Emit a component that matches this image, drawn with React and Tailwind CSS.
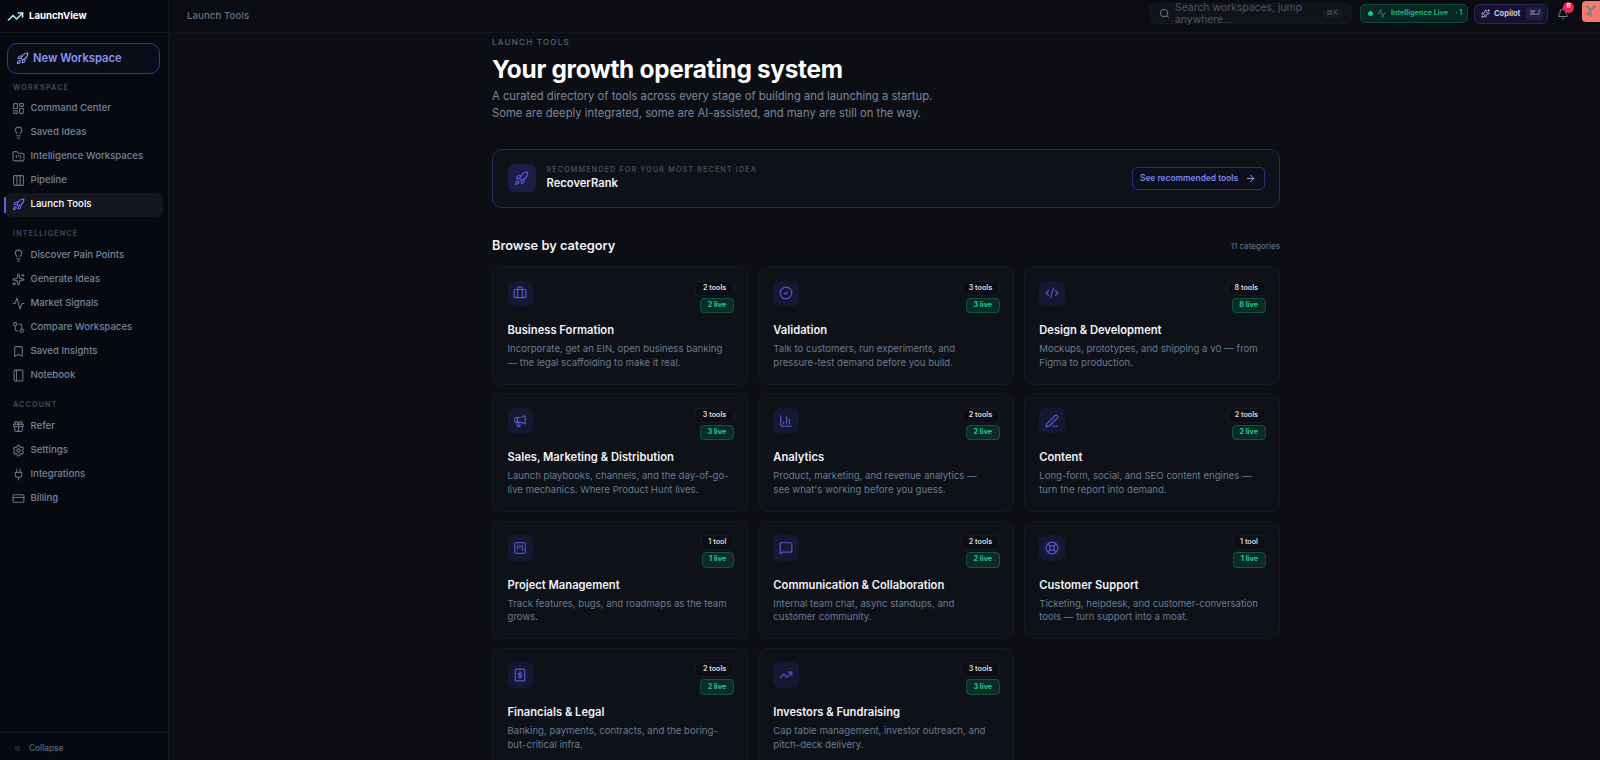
import {
  Activity, ArrowRight, BarChart3, Bell, Bookmark, Briefcase, ChevronsLeft, CircleCheck, CodeXml, Columns3,
  CreditCard, FolderKanban, Gift, GitCompare, LayoutDashboard, LifeBuoy, Lightbulb, Megaphone, MessageSquare,
  PenLine, Plug, Rocket, Search, Settings, Sparkles, SquareKanban, TrendingUp,
} from 'lucide-react';

function NotebookIcon({ className }) {
  return (
    <svg className={className} viewBox="0 0 24 24" fill="none" stroke="currentColor" strokeWidth="2" strokeLinecap="round" strokeLinejoin="round">
      <rect x="4" y="2" width="16" height="20" rx="2" />
      <path d="M8.5 2v20" />
    </svg>
  );
}

const navGroups = [
  {
    label: 'Workspace',
    items: [
      { name: 'Command Center', icon: LayoutDashboard },
      { name: 'Saved Ideas', icon: Lightbulb },
      { name: 'Intelligence Workspaces', icon: FolderKanban },
      { name: 'Pipeline', icon: Columns3 },
      { name: 'Launch Tools', icon: Rocket, active: true },
    ],
  },
  {
    label: 'Intelligence',
    items: [
      { name: 'Discover Pain Points', icon: Lightbulb },
      { name: 'Generate Ideas', icon: Sparkles },
      { name: 'Market Signals', icon: Activity },
      { name: 'Compare Workspaces', icon: GitCompare },
      { name: 'Saved Insights', icon: Bookmark },
      { name: 'Notebook', icon: NotebookIcon },
    ],
  },
  {
    label: 'Account',
    items: [
      { name: 'Refer', icon: Gift },
      { name: 'Settings', icon: Settings },
      { name: 'Integrations', icon: Plug },
      { name: 'Billing', icon: CreditCard },
    ],
  },
];

// lucide has no portrait receipt with a dollar sign in it
function DollarDoc({ className }) {
  return (
    <svg className={className} viewBox="0 0 24 24" fill="none" stroke="currentColor" strokeWidth="2" strokeLinecap="round" strokeLinejoin="round">
      <rect x="4" y="2" width="16" height="20" rx="2" />
      <path d="M12 6v12M15 8.5h-4a1.75 1.75 0 0 0 0 3.5h2a1.75 1.75 0 0 1 0 3.5H9" />
    </svg>
  );
}

const categories = [
  { name: 'Business Formation', tools: '2 tools', live: '2 live', icon: Briefcase, desc: 'Incorporate, get an EIN, open business banking — the legal scaffolding to make it real.' },
  { name: 'Validation', tools: '3 tools', live: '3 live', icon: CircleCheck, desc: 'Talk to customers, run experiments, and pressure-test demand before you build.' },
  { name: 'Design & Development', tools: '8 tools', live: '8 live', icon: CodeXml, desc: 'Mockups, prototypes, and shipping a v0 — from Figma to production.' },
  { name: 'Sales, Marketing & Distribution', tools: '3 tools', live: '3 live', icon: Megaphone, desc: 'Launch playbooks, channels, and the day-of-go-live mechanics. Where Product Hunt lives.' },
  { name: 'Analytics', tools: '2 tools', live: '2 live', icon: BarChart3, desc: "Product, marketing, and revenue analytics — see\u00a0what's working before you guess." },
  { name: 'Content', tools: '2 tools', live: '2 live', icon: PenLine, desc: 'Long-form, social, and SEO content engines — turn the report into demand.' },
  { name: 'Project Management', tools: '1 tool', live: '1 live', icon: SquareKanban, desc: 'Track features, bugs, and roadmaps as the team grows.' },
  { name: 'Communication & Collaboration', tools: '2 tools', live: '2 live', icon: MessageSquare, desc: 'Internal team chat, async standups, and customer community.' },
  { name: 'Customer Support', tools: '1 tool', live: '1 live', icon: LifeBuoy, desc: 'Ticketing, helpdesk, and customer-conversation tools — turn support into a moat.' },
  { name: 'Financials & Legal', tools: '2 tools', live: '2 live', icon: DollarDoc, desc: 'Banking, payments, contracts, and the boring-but-critical infra.' },
  { name: 'Investors & Fundraising', tools: '3 tools', live: '3 live', icon: TrendingUp, desc: 'Cap table management, investor outreach, and pitch-deck delivery.' },
];

function Sidebar() {
  return (
    <aside className="w-[169px] shrink-0 h-full flex flex-col bg-[#070910] border-r border-[#14171e]">
      <div className="h-[33px] shrink-0 flex items-center gap-[5px] pl-[7px] border-b border-[#12151b]">
        <TrendingUp className="w-[17px] h-[17px] text-[#b5ecec]" strokeWidth={2.2} />
        <span className="text-[9.6px] font-bold text-white">LaunchView</span>
      </div>

      <div className="flex-1 px-[5px] pt-[10px]">
        <button className="ml-[2px] w-[153px] h-[31px] flex items-center gap-[4px] pl-[8px] rounded-[10px] border border-[#363a8c] bg-[#0a0c18] text-[#8b95f5]">
          <Rocket className="w-[13px] h-[13px]" />
          <span className="text-[11.2px] font-semibold">New Workspace</span>
        </button>

        {navGroups.map((group, i) => (
          <div key={group.label} className={i === 0 ? 'mt-[7px]' : 'mt-[10.5px]'}>
            <div className="h-[15px] flex items-center pl-[8px] text-[7.2px] font-semibold uppercase tracking-[1.15px] text-[#454c5a]">
              {group.label}
            </div>
            <div className={`flex flex-col ${i === 0 ? 'mt-[0.5px]' : 'mt-[1.5px]'}`}>
              {group.items.map((item) => {
                const Icon = item.icon;
                return (
                  <div
                    key={item.name}
                    className={`relative h-[24px] flex items-center gap-[5.5px] pl-[7px] rounded-[6px] text-[9.6px] font-medium ${
                      item.active ? 'bg-[#14161d] text-white' : 'text-[#75839a]'
                    }`}
                  >
                    {item.active && <span className="absolute -left-[1px] top-[4px] bottom-[4px] w-[1.5px] bg-[#5b5fe0]" />}
                    <Icon className={`w-[13px] h-[13px] shrink-0 ${item.active ? 'text-[#6c70ee]' : 'text-[#667286]'}`} />
                    <span>{item.name}</span>
                  </div>
                );
              })}
            </div>
          </div>
        ))}
      </div>

      <div className="h-[28px] shrink-0 flex items-center gap-[7px] pl-[13px] pt-[3px] border-t border-[#12151b] text-[8.3px] font-medium text-[#5d6a7e]">
        <ChevronsLeft className="w-[9px] h-[9px]" />
        Collapse
      </div>
    </aside>
  );
}

function Topbar() {
  return (
    <header className="h-[33px] shrink-0 flex items-center justify-between pl-[18px] border-b border-[#12151b] bg-[#0a0c11]">
      <span className="text-[9.6px] tracking-[0.1px] font-medium text-[#69727f]">Launch Tools</span>
      <div className="flex items-center h-full">
        <div className="w-[203px] h-[21px] -mt-[5px] flex items-center pl-[9px] pr-[10px] gap-[5px] rounded-[5px] border border-[#14171d] bg-[#10131a]">
          <Search className="w-[11px] h-[11px] shrink-0 text-[#7a828f]" />
          <span className="flex-1 text-[10.4px] leading-[11.5px] text-[#4e5561]">Search workspaces, jump anywhere...</span>
          <span className="shrink-0 w-[18px] h-[9px] flex items-center justify-center rounded-[3px] bg-[#171a21] text-[7px] text-[#474d58]">⌘K</span>
        </div>
        <div className="ml-[8px] w-[108px] h-[19px] -mt-[5px] flex items-center gap-[4px] pl-[7px] whitespace-nowrap rounded-[5px] border border-[#0f4a39] bg-[#0a2620] text-[7.2px] font-bold text-[#14b981]">
          <span className="w-[5px] h-[5px] rounded-full bg-[#10c98a]" />
          <Activity className="w-[9px] h-[9px]" />
          <span className="ml-[1px]">Intelligence Live</span>
          <span className="ml-[3px]">· 1</span>
        </div>
        <div className="ml-[6px] w-[74px] h-[20px] -mt-[5px] flex items-center gap-[4px] pl-[6px] whitespace-nowrap rounded-[5px] border border-[#2b2258] bg-[#151130] text-[7.5px] font-bold text-[#c9cbe4]">
          <Sparkles className="w-[9px] h-[9px]" />
          Copilot
          <span className="ml-[2px] px-[3px] py-[1px] rounded-[3px] bg-[#22203c] text-[7px] text-[#777a94]">⌘J</span>
        </div>
        <div className="relative ml-[9px] -mt-[5px]">
          <Bell className="w-[12px] h-[12px] text-[#7c8492]" />
          <span className="absolute -top-[6px] left-[6px] w-[11px] h-[11px] rounded-full bg-[#f0254d] flex items-center justify-center text-[6.5px] font-bold text-white">8</span>
        </div>
        <div className="ml-[13px] w-[18px] h-[21px] -mt-[10px] rounded-l-[4px] bg-[#f8786b] overflow-hidden flex items-center justify-center">
          <svg className="w-[14px] h-[14px]" viewBox="0 0 14 14" fill="none">
            <path d="M3 2l3 4M11 2L7 6M6 6l1 6" stroke="#3d8f86" strokeWidth="1.6" strokeLinecap="round" />
            <circle cx="4" cy="10" r="1.4" fill="#9a5a6a" />
          </svg>
        </div>
      </div>
    </header>
  );
}

function CategoryCard({ cat }) {
  const Icon = cat.icon;
  return (
    <div className="h-[118.5px] rounded-[10px] border border-[#161a21] bg-[#0e1118] pl-[14.5px] pr-[13.5px] pt-[13.5px]">
      <div className="flex justify-between items-start h-[33px]">
        <div className="w-[25.6px] h-[25.6px] rounded-[6px] bg-[#161730] flex items-center justify-center text-[#5456d8]">
          <Icon className="w-[14px] h-[14px]" />
        </div>
        <div className="flex flex-col items-end gap-[2px]">
          <span className="h-[15px] px-[6.5px] flex items-center rounded-[4px] border border-[#171a20] bg-[#0c0e14] text-[7.2px] font-semibold text-[#d6d9de]">{cat.tools}</span>
          <span className="h-[15.5px] px-[6.5px] flex items-center rounded-[4px] border border-[#10533f] bg-[#0b2c25] text-[7.2px] font-bold text-[#22c98a]">{cat.live}</span>
        </div>
      </div>
      <h3 className="mt-[8.5px] text-[11.2px] leading-[16px] font-semibold text-[#f2f3f5]">{cat.name}</h3>
      <p className="mt-[4px] pr-[1px] text-[9.6px] leading-[13.7px] text-[#6b7b92]">{cat.desc}</p>
    </div>
  );
}

export default function App() {
  return (
    <div className="h-[760px] w-full flex overflow-hidden bg-[#0c0e13] font-['Inter',sans-serif]">
      <Sidebar />
      <main className="flex-1 min-w-0 flex flex-col">
        <Topbar />
        <div className="flex-1 overflow-hidden">
          <div className="w-[788px] ml-[323px] pt-[3px]">
            <div className="text-[8px] font-medium uppercase tracking-[1.25px] text-[#5b6472] leading-[12px]">Launch Tools</div>
            <h1 className="mt-[5px] text-[24.4px] leading-[32px] font-bold tracking-[-0.3px] text-white">Your growth operating system</h1>
            <p className="mt-[3px] text-[11.25px] leading-[17px] text-[#7a889c]">
              A curated directory of tools across every stage of building and launching a startup.<br />
              Some are deeply integrated, some are AI-assisted, and many are still on the way.
            </p>

            <div className="mt-[26.5px] h-[59px] flex items-center justify-between rounded-[10px] border border-[#2a2c66] bg-[#0f1119] pl-[14.5px] pr-[14.5px]">
              <div className="flex items-center gap-[11px]">
                <div className="w-[28px] h-[28px] rounded-[6px] bg-[#1c1d44] flex items-center justify-center text-[#5456d8]">
                  <Rocket className="w-[15px] h-[15px]" />
                </div>
                <div>
                  <div className="text-[7.2px] leading-[10px] font-medium uppercase tracking-[1.14px] text-[#4d5462]">Recommended for your most recent idea</div>
                  <div className="mt-[0.5px] text-[11.2px] leading-[16px] font-semibold text-[#f2f3f5]">RecoverRank</div>
                </div>
              </div>
              <button className="w-[133px] h-[23px] flex items-center justify-center gap-[7px] rounded-[5px] border border-[#2e2f78] bg-[#0d0e1b] text-[8.4px] font-semibold text-[#7d88ee]">
                See recommended tools
                <ArrowRight className="w-[11px] h-[11px] text-[#a3a9e8]" />
              </button>
            </div>

            <div className="mt-[29px] flex items-center justify-between">
              <h2 className="text-[12.8px] leading-[18px] font-semibold text-[#f2f3f5]">Browse by category</h2>
              <span className="text-[8px] font-medium text-[#5f6d84]">11 categories</span>
            </div>

            <div className="mt-[11.5px] grid grid-cols-3 gap-x-[9.6px] gap-y-[8.8px]">
              {categories.map((cat) => (
                <CategoryCard key={cat.name} cat={cat} />
              ))}
            </div>
          </div>
        </div>
      </main>
    </div>
  );
}
